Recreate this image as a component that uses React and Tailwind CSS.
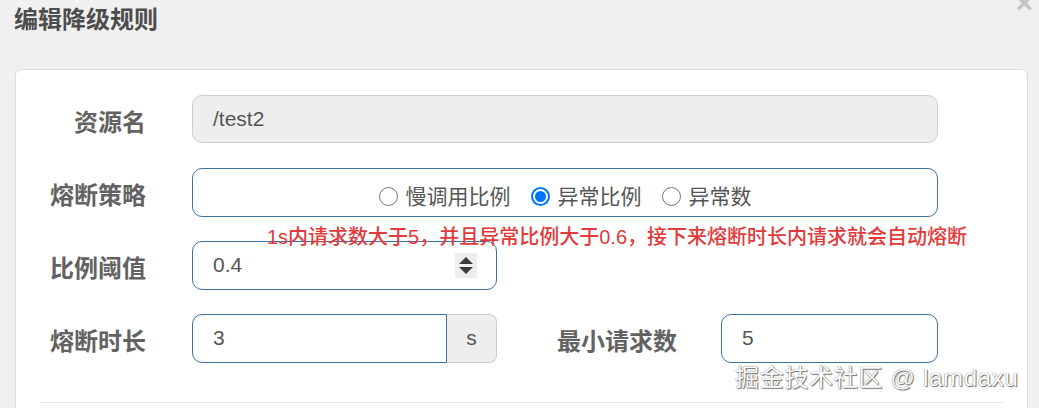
const STRATEGIES = [
  { key: "slow", label: "慢调用比例" },
  { key: "ratio", label: "异常比例" },
  { key: "count", label: "异常数" },
];

function Radio({ checked, label }) {
  return (
    <label className="flex items-center gap-[8px]">
      {checked ? (
        <span className="flex h-[19px] w-[19px] items-center justify-center rounded-full border-[2px] border-[#0075ff] bg-white">
          <span className="h-[11px] w-[11px] rounded-full bg-[#0075ff]" />
        </span>
      ) : (
        <span className="h-[19px] w-[19px] rounded-full border border-[#767676] bg-white" />
      )}
      <span>{label}</span>
    </label>
  );
}

function Label({ children, className = "w-[130px]" }) {
  return (
    <div className={`${className} shrink-0 pt-[8px] text-right text-[24px] font-bold text-[#626262]`}>{children}</div>
  );
}

function Spinner() {
  return (
    <div className="flex h-[25px] w-[22px] flex-col items-center justify-center gap-[3px] bg-[#eeeeee]">
      <span className="h-0 w-0 border-x-[7px] border-b-[7px] border-x-transparent border-b-[#3a3a3a]" />
      <span className="h-0 w-0 border-x-[7px] border-t-[7px] border-x-transparent border-t-[#3a3a3a]" />
    </div>
  );
}

export default function App() {
  const selected = "ratio";
  return (
    <div className="relative h-[408px] w-[1039px] overflow-hidden bg-[#f0f0f0] font-['Liberation_Sans','Noto_Sans_CJK_SC',sans-serif] text-[21px] text-[#555]">
      <div className="absolute right-[6px] top-[-12px] text-[30px] font-bold leading-none text-[#c4c4c4]">×</div>

      <div className="px-[14px] pt-[4px] text-[24px] font-bold leading-[32px] text-[#4d4d4d]">编辑降级规则</div>

      <div className="ml-[15px] mt-[33px] w-[1013px] rounded-[6px] border border-[#dddddd] bg-white pt-[25px] pb-[20px]">
        <div className="flex flex-col gap-[25px]">
          <div className="flex h-[48px] items-center">
            <Label>资源名</Label>
            <div className="ml-[46px] flex h-[48px] w-[746px] items-center rounded-[10px] border border-[#cccccc] bg-[#eeeeee] px-[20px]">
              /test2
            </div>
          </div>

          <div className="flex h-[48px] items-center">
            <Label>熔断策略</Label>
            <div className="relative ml-[46px]">
              <div className="flex h-[49px] w-[746px] items-center justify-center gap-[20px] rounded-[10px] border border-[#3f6f9f] bg-white pt-[9px]">
                {STRATEGIES.map((s) => (
                  <Radio key={s.key} checked={s.key === selected} label={s.label} />
                ))}
              </div>
              <div className="absolute left-[75px] top-full mt-[8px] whitespace-nowrap text-[20px] font-medium leading-[24px] text-[#e23a3a]">
                1s内请求数大于5，并且异常比例大于0.6，接下来熔断时长内请求就会自动熔断
              </div>
            </div>
          </div>

          <div className="flex h-[48px] items-center">
            <Label>比例阈值</Label>
            <div className="ml-[46px] flex h-[49px] w-[305px] items-center justify-between rounded-[10px] border border-[#3f6f9f] bg-white pl-[20px] pr-[19px]">
              <span>0.4</span>
              <Spinner />
            </div>
          </div>

          <div className="flex h-[48px] items-center">
            <Label>熔断时长</Label>
            <div className="ml-[46px] flex h-[49px] w-[305px]">
              <div className="flex flex-1 items-center rounded-l-[10px] border border-[#3f6f9f] bg-white px-[20px]">3</div>
              <div className="flex w-[50px] items-center justify-center rounded-r-[8px] border border-l-0 border-[#cccccc] bg-[#eeeeee]">
                s
              </div>
            </div>
            <Label className="w-[180px]">最小请求数</Label>
            <div className="ml-[44px] flex h-[49px] w-[217px] items-center rounded-[10px] border border-[#3f6f9f] bg-white px-[20px]">
              5
            </div>
          </div>
        </div>

        <div className="mx-[24px] mt-[40px] border-t border-[#e5e5e5]" />
      </div>

      <div className="absolute left-[735px] top-[364px] whitespace-nowrap text-[24px] leading-[28px] tracking-[0.7px] text-white [text-shadow:0_0_1px_#444,1px_1px_1px_#777]">
        掘金技术社区 @ lamdaxu
      </div>
    </div>
  );
}
